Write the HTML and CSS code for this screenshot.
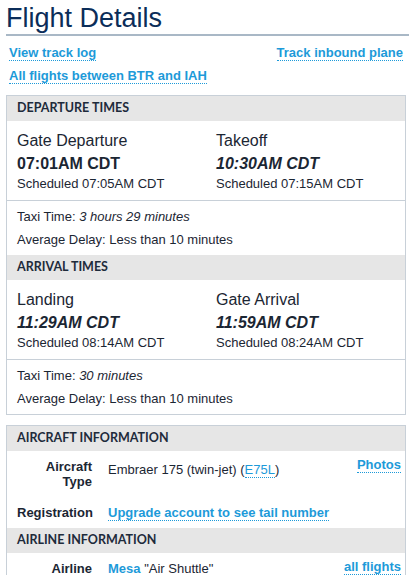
FILE: index.html
```html
<!DOCTYPE html>
<html lang="en">
<head>
<meta charset="utf-8">
<title>Flight Details</title>
<link rel="stylesheet" href="styles.css">
</head>
<body>
<div class="page">
  <h1 class="title">Flight Details</h1>
  <div class="links">
    <div class="link-row">
      <a href="#">View track log</a>
      <a href="#">Track inbound plane</a>
    </div>
    <div class="link-row">
      <a href="#">All flights between BTR and IAH</a>
    </div>
  </div>

  <div class="box">
    <div class="head">Departure Times</div>
    <div class="times">
      <div class="col">
        <div class="label">Gate Departure</div>
        <div class="time">07:01AM CDT</div>
        <div class="sched">Scheduled 07:05AM CDT</div>
      </div>
      <div class="col">
        <div class="label">Takeoff</div>
        <div class="time est">10:30AM CDT</div>
        <div class="sched">Scheduled 07:15AM CDT</div>
      </div>
    </div>
    <div class="extra">
      <div>Taxi Time: <em>3 hours 29 minutes</em></div>
      <div>Average Delay: Less than 10 minutes</div>
    </div>
    <div class="head">Arrival Times</div>
    <div class="times">
      <div class="col">
        <div class="label">Landing</div>
        <div class="time est">11:29AM CDT</div>
        <div class="sched">Scheduled 08:14AM CDT</div>
      </div>
      <div class="col">
        <div class="label">Gate Arrival</div>
        <div class="time est">11:59AM CDT</div>
        <div class="sched">Scheduled 08:24AM CDT</div>
      </div>
    </div>
    <div class="extra">
      <div>Taxi Time: <em>30 minutes</em></div>
      <div>Average Delay: Less than 10 minutes</div>
    </div>
  </div>

  <div class="box">
    <div class="head">Aircraft Information</div>
    <div class="info-row">
      <div class="info-label">Aircraft Type</div>
      <div class="info-value lower">Embraer 175 (twin-jet) (<a class="plain" href="#">E75L</a>)</div>
      <div class="info-side"><a href="#">Photos</a></div>
    </div>
    <div class="info-row">
      <div class="info-label">Registration</div>
      <div class="info-value"><a class="strong" href="#">Upgrade account to see tail number</a></div>
      <div class="info-side"></div>
    </div>
    <div class="head">Airline Information</div>
    <div class="info-row">
      <div class="info-label">Airline</div>
      <div class="info-value"><a class="strong" href="#">Mesa</a> "Air Shuttle"</div>
      <div class="info-side"><a href="#">all flights</a></div>
    </div>
  </div>
</div>
</body>
</html>
```
FILE: styles.css
```css
* { box-sizing: border-box; }

body {
  margin: 0;
  background: #ffffff;
  color: #1b2633;
  font-family: "Liberation Sans", Arial, sans-serif;
}

.page {
  width: 409px;
  padding-left: 6px;
}

.title {
  margin: 0;
  padding: 2px 0 0;
  font-size: 27px;
  font-weight: normal;
  line-height: 32px;
  color: #0b2d59;
  border-bottom: 2px solid #a9b8c6;
}

.links {
  padding: 9px 6px 0 3px;
  font-size: 13px;
  font-weight: bold;
  line-height: 15px;
}

.link-row {
  display: flex;
  justify-content: space-between;
}

.link-row + .link-row {
  margin-top: 7px;
}

a {
  color: #1d9ad9;
  text-decoration: none;
  border-bottom: 1px dotted #1d9ad9;
}

a.plain { font-weight: normal; }
a.strong { font-weight: bold; }

.box {
  margin: 11px 3px 0 0;
  border: 1px solid #c8d0d8;
}

.box + .box {
  margin-top: 10px;
}

.head {
  background: #e6e6e6;
  padding: 0 10px 2px;
  font-family: Lato, "Liberation Sans", sans-serif;
  font-size: 12.5px;
  font-weight: bold;
  line-height: 23px;
  text-transform: uppercase;
  color: #1e2b3b;
}

.times {
  display: grid;
  grid-template-columns: 1fr 1fr;
  padding: 9px 0 8px;
  border-bottom: 1px solid #c8d0d8;
}

.col {
  padding: 0 10px;
}

.label {
  font-size: 16px;
  line-height: 22px;
}

.time {
  font-size: 16px;
  font-weight: bold;
  line-height: 24px;
}

.time.est {
  font-style: italic;
}

.sched {
  font-size: 13px;
  line-height: 16px;
}

.extra {
  padding: 4px 10px;
  font-size: 13px;
  line-height: 23px;
}

.info-row {
  display: grid;
  grid-template-columns: 75px 1fr auto;
  column-gap: 16px;
  align-items: start;
  padding: 8px 4px 8px 10px;
  font-size: 13px;
}

.info-label {
  font-weight: bold;
  text-align: right;
  line-height: 15px;
}

.info-value {
  line-height: 15px;
}

.info-value.lower {
  padding-top: 3px;
}

.info-side {
  font-weight: bold;
  line-height: 15px;
  margin-top: -2px;
}
```
